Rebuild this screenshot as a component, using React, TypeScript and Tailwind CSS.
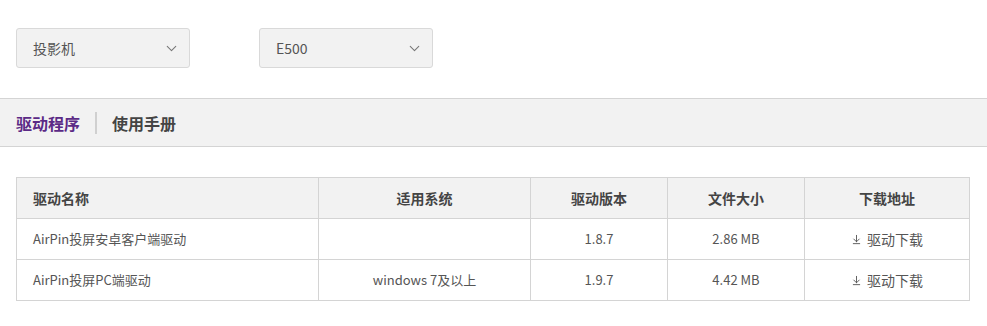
import { ChevronDown, ArrowDownToLine } from "lucide-react";

const rows = [
  { name: "AirPin投屏安卓客户端驱动", os: "", version: "1.8.7", size: "2.86 MB" },
  { name: "AirPin投屏PC端驱动", os: "windows 7及以上", version: "1.9.7", size: "4.42 MB" },
];

function Select({ label }: { label: string }) {
  return (
    <div className="flex h-[40px] w-[174px] items-center justify-between rounded-[3px] border border-[#d9d9d9] bg-[#f2f2f2] pl-4 pr-[9px] text-[14px] text-[#555]">
      <span>{label}</span>
      <ChevronDown className="h-[17px] w-[17px] text-[#777]" strokeWidth={1.5} />
    </div>
  );
}

export default function App() {
  return (
    <div className="min-h-[326px] bg-white font-['Noto_Sans_CJK_SC',sans-serif]">
      <div className="flex gap-[69px] px-4 pt-[28px]">
        <Select label="投影机" />
        <Select label="E500" />
      </div>

      <div className="mt-[30px] flex h-[49px] items-center border-y border-[#d4d4d4] bg-[#f2f2f2] px-4 text-[16px] font-bold">
        <span className="text-[#5b2a86]">驱动程序</span>
        <span className="mx-[15px] h-[22px] w-[2px] bg-[#d0d0d0]" />
        <span className="text-[#444]">使用手册</span>
      </div>

      <div className="px-4 pt-[30px]">
        <table className="w-[954px] table-fixed border-collapse text-[13px] text-[#555]">
          <colgroup>
            <col className="w-[302px]" />
            <col className="w-[212px]" />
            <col className="w-[137px]" />
            <col className="w-[137px]" />
            <col />
          </colgroup>
          <thead>
            <tr className="h-[41px] bg-[#f2f2f2] text-[14px] font-bold text-[#444]">
              <th className="border border-[#d4d4d4] pl-4 text-left">驱动名称</th>
              <th className="border border-[#d4d4d4]">适用系统</th>
              <th className="border border-[#d4d4d4]">驱动版本</th>
              <th className="border border-[#d4d4d4]">文件大小</th>
              <th className="border border-[#d4d4d4]">下载地址</th>
            </tr>
          </thead>
          <tbody>
            {rows.map((r) => (
              <tr key={r.name} className="h-[41px]">
                <td className="border border-[#d4d4d4] pl-4">{r.name}</td>
                <td className="border border-[#d4d4d4] text-center">{r.os}</td>
                <td className="border border-[#d4d4d4] text-center">{r.version}</td>
                <td className="border border-[#d4d4d4] text-center">{r.size}</td>
                <td className="border border-[#d4d4d4] text-center">
                  <span className="inline-flex items-center gap-[5px] text-[14px]">
                    <ArrowDownToLine className="h-[11px] w-[11px]" strokeWidth={2} />
                    驱动下载
                  </span>
                </td>
              </tr>
            ))}
          </tbody>
        </table>
      </div>
    </div>
  );
}
